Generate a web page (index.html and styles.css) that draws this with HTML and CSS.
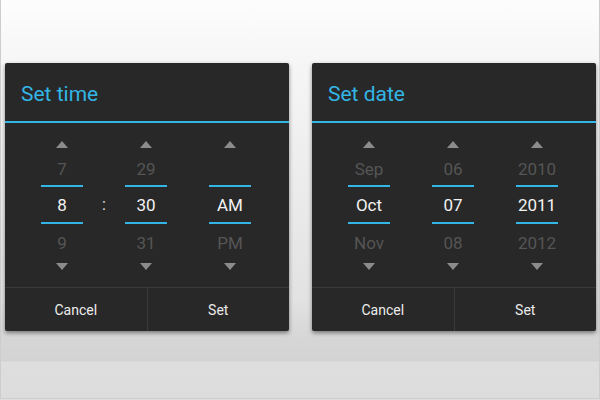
FILE: index.html
```html
<!DOCTYPE html>
<html lang="en">
<head>
    <meta charset="UTF-8">
    <meta name="viewport" content="width=device-width, initial-scale=1.0">
    <title>Pickers</title>
    <link rel="stylesheet" href="styles.css">
</head>
<body>

<div class="stage">
    <section class="dialog">
        <h2 class="dialog-title">Set time</h2>
        <div class="picker picker-time">
            <div class="spinner">
                <span class="arrow up"></span>
                <div class="value prev">7</div>
                <div class="value current">8</div>
                <div class="value next">9</div>
                <span class="arrow down"></span>
            </div>
            <div class="separator">:</div>
            <div class="spinner">
                <span class="arrow up"></span>
                <div class="value prev">29</div>
                <div class="value current">30</div>
                <div class="value next">31</div>
                <span class="arrow down"></span>
            </div>
            <div class="spinner">
                <span class="arrow up"></span>
                <div class="value prev">&nbsp;</div>
                <div class="value current">AM</div>
                <div class="value next">PM</div>
                <span class="arrow down"></span>
            </div>
        </div>
        <div class="buttons">
            <button>Cancel</button>
            <button>Set</button>
        </div>
    </section>

    <section class="dialog">
        <h2 class="dialog-title">Set date</h2>
        <div class="picker picker-date">
            <div class="spinner">
                <span class="arrow up"></span>
                <div class="value prev">Sep</div>
                <div class="value current">Oct</div>
                <div class="value next">Nov</div>
                <span class="arrow down"></span>
            </div>
            <div class="spinner">
                <span class="arrow up"></span>
                <div class="value prev">06</div>
                <div class="value current">07</div>
                <div class="value next">08</div>
                <span class="arrow down"></span>
            </div>
            <div class="spinner">
                <span class="arrow up"></span>
                <div class="value prev">2010</div>
                <div class="value current">2011</div>
                <div class="value next">2012</div>
                <span class="arrow down"></span>
            </div>
        </div>
        <div class="buttons">
            <button>Cancel</button>
            <button>Set</button>
        </div>
    </section>
</div>

</body>
</html>
```

FILE: styles.css
```css
body {
    margin: 0;
    padding: 0;
    font-family: Roboto, "Noto Sans", sans-serif;
    background-color: #dddddd;
}
.stage {
    box-sizing: border-box;
    height: 399px;
    display: flex;
    gap: 23px;
    padding: 63px 3px 0 4px;
    border: 1px solid #cdcdcd;
    border-top: none;
    background: linear-gradient(#fdfdfd 0, #f6f6f6 60px, #e2e2e2 300px, #d6d6d6 338px, #d3d3d3 361px, #dedede 362px, #dcdcdc 100%);
}
.dialog {
    width: 284px;
    height: 268px;
    display: flex;
    flex-direction: column;
    background-color: #282828;
    border-radius: 2px;
    box-shadow: 0 2px 4px rgba(0, 0, 0, 0.45);
}
.dialog-title {
    box-sizing: border-box;
    height: 60px;
    margin: 0;
    padding: 4px 0 0 16px;
    display: flex;
    align-items: center;
    font-size: 21px;
    font-weight: normal;
    color: #33b5e5;
    border-bottom: 2px solid #33b5e5;
}
.picker {
    height: 164px;
    display: grid;
    padding: 0 15px;
}
.picker-time {
    grid-template-columns: 84px 0 84px 84px;
}
.picker-date {
    grid-template-columns: 84px 84px 84px;
}
.spinner {
    display: flex;
    flex-direction: column;
    align-items: center;
    padding-top: 18px;
    font-size: 17px;
}
.arrow {
    width: 0;
    height: 0;
    border-left: 6.5px solid transparent;
    border-right: 6.5px solid transparent;
}
.arrow.up {
    border-bottom: 7px solid #8c8c8c;
}
.arrow.down {
    margin-top: 1px;
    border-top: 7px solid #8c8c8c;
}
.value {
    width: 42px;
    text-align: center;
    color: #555555;
}
.value.prev {
    height: 37px;
    box-sizing: border-box;
    padding-top: 6px;
    line-height: 31px;
}
.value.current {
    height: 39px;
    box-sizing: border-box;
    padding-top: 2px;
    line-height: 33px;
    color: #f2f2f2;
    border-top: 2px solid #33b5e5;
    border-bottom: 2px solid #33b5e5;
}
.value.next {
    height: 38px;
    line-height: 38px;
}
.separator {
    display: flex;
    align-items: center;
    justify-content: center;
    padding-bottom: 1px;
    color: #e0e0e0;
    font-size: 16px;
}
.buttons {
    display: flex;
    flex: 1;
    border-top: 1px solid #3a3a3a;
}
.buttons button {
    flex: 1;
    margin: 0;
    padding: 0;
    background: none;
    border: none;
    color: #ececec;
    font-family: Roboto, "Noto Sans", sans-serif;
    font-size: 14px;
}
.buttons button + button {
    border-left: 1px solid #3a3a3a;
}
```
